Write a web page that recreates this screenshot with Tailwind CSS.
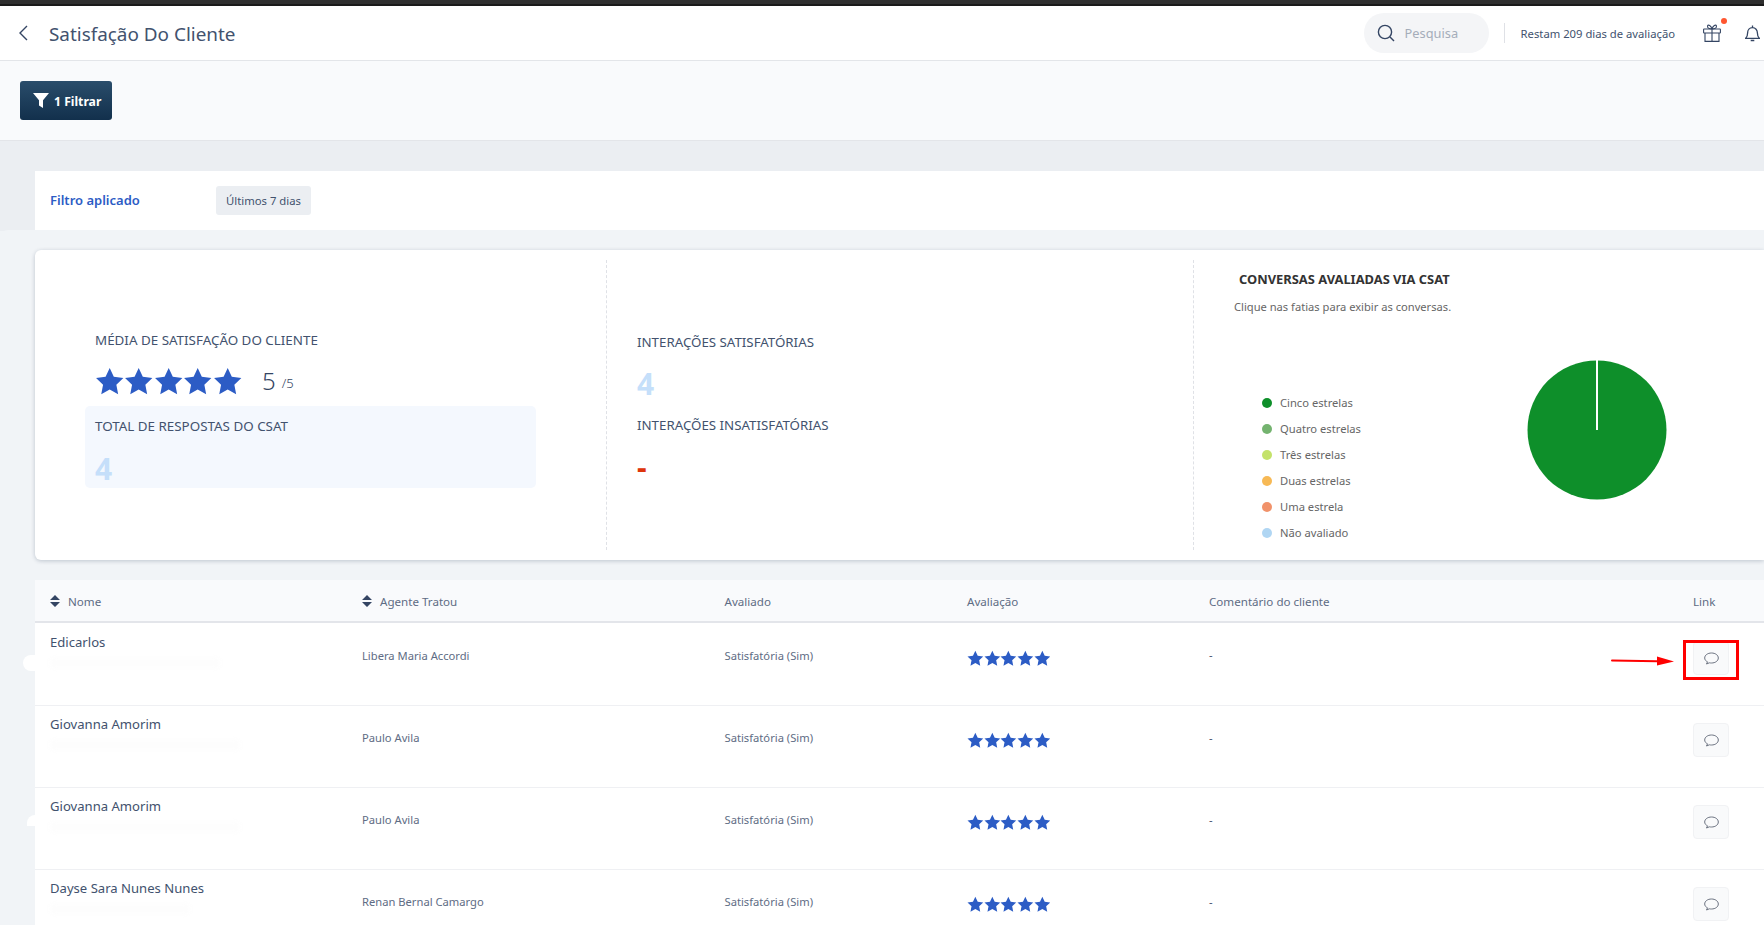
<!DOCTYPE html>
<html lang="pt">
<head>
<meta charset="utf-8">
<title>Satisfação Do Cliente</title>
<script src="https://cdn.jsdelivr.net/npm/@tailwindcss/browser@4"></script>
</head>
<body class="relative h-[925px] w-[1764px] overflow-hidden bg-[#f1f4f7] font-['Noto_Sans',sans-serif] text-[#42526e]">
<div class="h-[6px] border-b-2 border-[#1a1a1a] bg-[#2f2f2f]"></div>
<header class="flex h-[55px] items-center border-b border-[#e3e5e9] bg-white pl-[19px] pr-[4px]">
  <svg class="h-[16px] w-[9px] text-[#344563]" viewBox="0 0 9 16" fill="none" stroke="currentColor" stroke-width="1.4"><path d="M8 1 1 8l7 7"/></svg>
  <h1 class="ml-[21px] mt-[2px] text-[18.900px] font-normal leading-none text-[#42526e]">Satisfação Do Cliente</h1>
  <div class="ml-auto flex h-[40px] w-[125px] items-center rounded-[20px] bg-[#f4f5f7] pl-[13px]">
    <svg class="h-[18px] w-[18px] text-[#344563]" viewBox="0 0 18 18" fill="none" stroke="currentColor" stroke-width="1.4"><circle cx="8" cy="8" r="6.6"/><path d="m13 13 4 4"/></svg>
    <span class="ml-[10px] mt-[1px] text-[12.800px] text-[#a5adba]">Pesquisa</span>
  </div>
  <div class="ml-[15px] h-[20px] w-px bg-[#dfe1e6]"></div>
  <span class="ml-[16px] mt-[3px] text-[11.250px] text-[#42526e]">Restam 209 dias de avaliação</span>
  <div class="relative ml-[28px] h-[18px] w-[18px]">
    <svg class="h-[18px] w-[18px] text-[#344563]" viewBox="0 0 18 18" fill="none" stroke="currentColor" stroke-width="1.1"><rect x=".6" y="5" width="16.8" height="4" rx=".5"/><path d="M2 9v8.4h14V9M9 5v12.4M9 5C6 5 4 3.6 4.6 1.8 5.3.2 8 1.600 9 5Zm0 0c3 0 5-1.400 4.400-3.200C12.700.2 10 1.600 9 5Z"/></svg>
    <span class="absolute -right-[6px] -top-[6px] h-[6px] w-[6px] rounded-full bg-[#ff5630]"></span>
  </div>
  <svg class="ml-[24px] h-[17px] w-[15px] shrink-0 text-[#344563]" viewBox="0 0 15 17" fill="none" stroke="currentColor" stroke-width="1.3"><path d="M.7 13.300h13.600c-1.700-1.500-1.900-3-1.900-5.300 0-3-1.900-5.300-4.900-5.300S2.600 5 2.600 8c0 2.300-.2 3.800-1.900 5.300ZM7.500.5v2.200M5.700 15.500h3.600"/></svg>
</header>
<div class="flex h-[80px] items-center border-b border-[#e3e5e9] bg-[#f9fafc] pl-[20px]">
  <button class="flex h-[39px] w-[92px] items-center rounded-[3px] bg-gradient-to-b from-[#2a4d6b] to-[#12304c] pl-[13px] text-[12.200px] font-bold text-white">
    <svg class="mr-[5px] h-[15px] w-[16px]" viewBox="0 0 16 15" fill="currentColor"><path d="M0 0h16l-6 7.200V15L6 12.500V7.200Z"/></svg><span class="mt-[3px]">1 Filtrar</span>
  </button>
</div>
<div class="h-[90px] bg-[#ebeef2] pl-[35px] pt-[30px]">
  <div class="flex h-[59px] items-center bg-white pl-[15px]">
    <span class="w-[166px] text-[13px] font-semibold text-[#2c5cc5]">Filtro aplicado</span>
    <span class="flex h-[29px] w-[95px] items-center justify-center rounded-[3px] bg-[#ebeef2] pt-[1px] text-[11.300px] text-[#42526e]">Últimos 7 dias</span>
  </div>
</div>
<main class="-mt-px rounded-tl-[8px] bg-[#f1f4f7] pl-[35px] pt-[20px]">
  <section class="flex h-[310px] rounded-l-[6px] bg-white py-[10px] shadow-[0_1px_4px_rgba(9,30,66,0.22)]">
    <div class="w-[571px] pl-[50px] pt-[70px]">
      <p class="pl-[10px] text-[13.400px] leading-[20px]">MÉDIA DE SATISFAÇÃO DO CLIENTE</p>
      <div class="mt-[13px] flex h-[36px] items-center pl-[10px]">
        <div class="flex w-[147px] text-[#2c5cc5]">
          <svg class="h-[29px] w-[29.500px]" viewBox="0 0 24 24" fill="currentColor"><path d="M12 .8l3.400 7.300 7.900 1-5.800 5.500 1.500 7.900-7-3.900-7 3.900 1.500-7.900L.7 9.100l7.900-1z"/></svg>
          <svg class="h-[29px] w-[29.500px]" viewBox="0 0 24 24" fill="currentColor"><path d="M12 .8l3.400 7.300 7.900 1-5.800 5.500 1.500 7.900-7-3.900-7 3.900 1.500-7.900L.7 9.100l7.900-1z"/></svg>
          <svg class="h-[29px] w-[29.500px]" viewBox="0 0 24 24" fill="currentColor"><path d="M12 .8l3.400 7.300 7.900 1-5.800 5.500 1.500 7.900-7-3.900-7 3.900 1.500-7.900L.7 9.100l7.900-1z"/></svg>
          <svg class="h-[29px] w-[29.500px]" viewBox="0 0 24 24" fill="currentColor"><path d="M12 .8l3.400 7.300 7.900 1-5.800 5.500 1.500 7.900-7-3.900-7 3.900 1.500-7.900L.7 9.100l7.900-1z"/></svg>
          <svg class="h-[29px] w-[29.500px]" viewBox="0 0 24 24" fill="currentColor"><path d="M12 .8l3.400 7.300 7.900 1-5.800 5.500 1.500 7.900-7-3.900-7 3.900 1.500-7.900L.7 9.100l7.900-1z"/></svg>
        </div>
        <span class="ml-[20px] text-[24px] font-light leading-none text-[#344563]">5</span>
        <span class="ml-[6px] mt-[4px] text-[13px] font-light leading-none text-[#344563]">/5</span>
      </div>
      <div class="mt-[7px] h-[82px] w-[451px] rounded-[5px] bg-[#f4f8fe] pl-[10px] pt-[10px]">
        <p class="text-[13.400px] leading-[20px]">TOTAL DE RESPOSTAS DO CSAT</p>
        <p class="mt-[15px] text-[30px] font-bold leading-[36px] text-[#c5dffa]">4</p>
      </div>
    </div>
    <div class="w-[587px] border-l border-dashed border-[#dfe1e6] pl-[30px] pt-[72px]">
      <p class="text-[13.300px] leading-[20px]">INTERAÇÕES SATISFATÓRIAS</p>
      <p class="mt-[13px] text-[30px] font-bold leading-[38px] text-[#c5dffa]">4</p>
      <p class="mt-[12px] text-[13.300px] leading-[20px]">INTERAÇÕES INSATISFATÓRIAS</p>
      <p class="mt-[13px] text-[30px] font-bold leading-[38px] text-[#de350b]">-</p>
    </div>
    <div class="relative flex-1 border-l border-dashed border-[#dfe1e6] pt-[9px]">
      <p class="pl-[45px] text-[12.900px] font-bold leading-[20px] text-[#333]">CONVERSAS AVALIADAS VIA CSAT</p>
      <p class="mt-[8px] pl-[40px] text-[11.150px] leading-[20px] text-[#666]">Clique nas fatias para exibir as conversas.</p>
      <ul class="mt-[76px] flex flex-col gap-[6px] pl-[68px] text-[11.200px] leading-[20px] text-[#666]">
        <li class="flex items-center"><span class="mr-[8px] h-[10px] w-[10px] rounded-full bg-[#0e8f2a]"></span>Cinco estrelas</li>
        <li class="flex items-center"><span class="mr-[8px] h-[10px] w-[10px] rounded-full bg-[#74b36f]"></span>Quatro estrelas</li>
        <li class="flex items-center"><span class="mr-[8px] h-[10px] w-[10px] rounded-full bg-[#c4e26a]"></span>Três estrelas</li>
        <li class="flex items-center"><span class="mr-[8px] h-[10px] w-[10px] rounded-full bg-[#f7b955]"></span>Duas estrelas</li>
        <li class="flex items-center"><span class="mr-[8px] h-[10px] w-[10px] rounded-full bg-[#f1926a]"></span>Uma estrela</li>
        <li class="flex items-center"><span class="mr-[8px] h-[10px] w-[10px] rounded-full bg-[#b0d6f3]"></span>Não avaliado</li>
      </ul>
      <svg class="absolute left-[333px] top-[100px] h-[140px] w-[140px]" viewBox="0 0 140 140"><circle cx="70" cy="70" r="69.5" fill="#0e8f2a"/><path d="M70 0v70" stroke="#fff" stroke-width="2"/></svg>
    </div>
  </section>

  <section class="mt-[20px] text-[11.200px]">
    <div class="grid h-[43px] grid-cols-[312px_362.500px_242.500px_242px_484px_1fr] items-center border-b-2 border-[#e3e5ea] bg-[#f9fafc] pl-[15px] text-[11.600px] font-normal text-[#5e6c84]">
      <div class="mt-[2px] flex items-center gap-[8px]"><svg class="h-[12px] w-[10px]" viewBox="0 0 10 12" fill="#344563"><path d="M5 0l5 5H0zM5 12 0 7h10z"/></svg>Nome</div>
      <div class="mt-[2px] flex items-center gap-[8px]"><svg class="h-[12px] w-[10px]" viewBox="0 0 10 12" fill="#344563"><path d="M5 0l5 5H0zM5 12 0 7h10z"/></svg>Agente Tratou</div>
      <div class="mt-[2px]">Avaliado</div>
      <div class="mt-[2px]">Avaliação</div>
      <div class="mt-[2px]">Comentário do cliente</div>
      <div class="mt-[2px]">Link</div>
    </div>

    <div class="grid h-[83px] grid-cols-[312px_362.500px_242.500px_242px_484px_1fr] border-b border-[#eff0f3] bg-white pl-[15px]">
      <div class="pt-[9px] text-[13.100px] leading-[20px]">Edicarlos<div class="mt-[6px] h-[10px] w-[170px] rounded-[4px] bg-[#fdfdfd] blur-[2px]"></div></div>
      <div class="pt-[23px] leading-[20px] text-[#5e6c84]">Libera Maria Accordi</div>
      <div class="pt-[23px] leading-[20px] text-[#5e6c84]">Satisfatória (Sim)</div>
      <div class="flex pt-[27px] text-[#2c5cc5]">
        <svg class="h-[17px] w-[16.700px]" viewBox="0 0 24 24" fill="currentColor"><path d="M12 .8l3.400 7.300 7.900 1-5.800 5.500 1.500 7.900-7-3.900-7 3.900 1.500-7.900L.7 9.100l7.900-1z"/></svg>
        <svg class="h-[17px] w-[16.700px]" viewBox="0 0 24 24" fill="currentColor"><path d="M12 .8l3.400 7.300 7.900 1-5.800 5.500 1.500 7.900-7-3.900-7 3.900 1.500-7.900L.7 9.100l7.900-1z"/></svg>
        <svg class="h-[17px] w-[16.700px]" viewBox="0 0 24 24" fill="currentColor"><path d="M12 .8l3.400 7.300 7.900 1-5.800 5.500 1.500 7.900-7-3.900-7 3.900 1.500-7.900L.7 9.100l7.900-1z"/></svg>
        <svg class="h-[17px] w-[16.700px]" viewBox="0 0 24 24" fill="currentColor"><path d="M12 .8l3.400 7.300 7.900 1-5.800 5.500 1.500 7.900-7-3.900-7 3.900 1.500-7.900L.7 9.100l7.900-1z"/></svg>
        <svg class="h-[17px] w-[16.700px]" viewBox="0 0 24 24" fill="currentColor"><path d="M12 .8l3.400 7.300 7.900 1-5.800 5.500 1.500 7.900-7-3.900-7 3.900 1.500-7.900L.7 9.100l7.900-1z"/></svg>
      </div>
      <div class="pt-[22px] leading-[20px]">-</div>
      <div class="pt-[18px]"><button class="flex h-[34px] w-[36px] items-center justify-center rounded-[4px] border border-[#f1f2f4] bg-[#f9fafb]"><svg class="h-[13px] w-[15px]" viewBox="0 0 15 13" fill="none" stroke="#6b7280"><path d="M3.500 9.800C1.800 9 .7 7.800.7 6 .7 3.100 3.700 1 7.500 1s6.800 2.100 6.800 5-3 5-6.800 5c-.7 0-1.400 0-2.100-.2L2.500 12Z"/></svg></button></div>
    </div>

    <div class="grid h-[82px] grid-cols-[312px_362.500px_242.500px_242px_484px_1fr] border-b border-[#eff0f3] bg-white pl-[15px]">
      <div class="pt-[8px] text-[13.100px] leading-[20px]">Giovanna Amorim<div class="mt-[6px] h-[10px] w-[190px] rounded-[4px] bg-[#fdfdfd] blur-[2px]"></div></div>
      <div class="pt-[22px] leading-[20px] text-[#5e6c84]">Paulo Avila</div>
      <div class="pt-[22px] leading-[20px] text-[#5e6c84]">Satisfatória (Sim)</div>
      <div class="flex pt-[26px] text-[#2c5cc5]">
        <svg class="h-[17px] w-[16.700px]" viewBox="0 0 24 24" fill="currentColor"><path d="M12 .8l3.400 7.300 7.900 1-5.800 5.500 1.500 7.900-7-3.900-7 3.900 1.500-7.900L.7 9.100l7.900-1z"/></svg>
        <svg class="h-[17px] w-[16.700px]" viewBox="0 0 24 24" fill="currentColor"><path d="M12 .8l3.400 7.300 7.900 1-5.800 5.500 1.500 7.900-7-3.900-7 3.900 1.500-7.900L.7 9.100l7.900-1z"/></svg>
        <svg class="h-[17px] w-[16.700px]" viewBox="0 0 24 24" fill="currentColor"><path d="M12 .8l3.400 7.300 7.900 1-5.800 5.500 1.500 7.900-7-3.900-7 3.900 1.500-7.900L.7 9.100l7.900-1z"/></svg>
        <svg class="h-[17px] w-[16.700px]" viewBox="0 0 24 24" fill="currentColor"><path d="M12 .8l3.400 7.300 7.900 1-5.800 5.500 1.500 7.900-7-3.900-7 3.900 1.500-7.900L.7 9.100l7.900-1z"/></svg>
        <svg class="h-[17px] w-[16.700px]" viewBox="0 0 24 24" fill="currentColor"><path d="M12 .8l3.400 7.300 7.900 1-5.800 5.500 1.500 7.900-7-3.900-7 3.900 1.500-7.900L.7 9.100l7.900-1z"/></svg>
      </div>
      <div class="pt-[22px] leading-[20px]">-</div>
      <div class="pt-[17px]"><button class="flex h-[34px] w-[36px] items-center justify-center rounded-[4px] border border-[#f1f2f4] bg-[#f9fafb]"><svg class="h-[13px] w-[15px]" viewBox="0 0 15 13" fill="none" stroke="#6b7280"><path d="M3.500 9.800C1.800 9 .7 7.800.7 6 .7 3.100 3.700 1 7.500 1s6.800 2.100 6.800 5-3 5-6.800 5c-.7 0-1.400 0-2.100-.2L2.500 12Z"/></svg></button></div>
    </div>

    <div class="grid h-[82px] grid-cols-[312px_362.500px_242.500px_242px_484px_1fr] border-b border-[#eff0f3] bg-white pl-[15px]">
      <div class="pt-[8px] text-[13.100px] leading-[20px]">Giovanna Amorim<div class="mt-[6px] h-[10px] w-[190px] rounded-[4px] bg-[#fdfdfd] blur-[2px]"></div></div>
      <div class="pt-[22px] leading-[20px] text-[#5e6c84]">Paulo Avila</div>
      <div class="pt-[22px] leading-[20px] text-[#5e6c84]">Satisfatória (Sim)</div>
      <div class="flex pt-[26px] text-[#2c5cc5]">
        <svg class="h-[17px] w-[16.700px]" viewBox="0 0 24 24" fill="currentColor"><path d="M12 .8l3.400 7.300 7.900 1-5.800 5.500 1.500 7.900-7-3.900-7 3.900 1.500-7.900L.7 9.100l7.900-1z"/></svg>
        <svg class="h-[17px] w-[16.700px]" viewBox="0 0 24 24" fill="currentColor"><path d="M12 .8l3.400 7.300 7.900 1-5.800 5.500 1.500 7.900-7-3.900-7 3.900 1.500-7.900L.7 9.100l7.900-1z"/></svg>
        <svg class="h-[17px] w-[16.700px]" viewBox="0 0 24 24" fill="currentColor"><path d="M12 .8l3.400 7.300 7.900 1-5.800 5.500 1.500 7.900-7-3.900-7 3.900 1.500-7.900L.7 9.100l7.900-1z"/></svg>
        <svg class="h-[17px] w-[16.700px]" viewBox="0 0 24 24" fill="currentColor"><path d="M12 .8l3.400 7.300 7.900 1-5.800 5.500 1.500 7.900-7-3.900-7 3.900 1.500-7.900L.7 9.100l7.900-1z"/></svg>
        <svg class="h-[17px] w-[16.700px]" viewBox="0 0 24 24" fill="currentColor"><path d="M12 .8l3.400 7.300 7.900 1-5.800 5.500 1.500 7.900-7-3.900-7 3.900 1.500-7.900L.7 9.100l7.900-1z"/></svg>
      </div>
      <div class="pt-[22px] leading-[20px]">-</div>
      <div class="pt-[17px]"><button class="flex h-[34px] w-[36px] items-center justify-center rounded-[4px] border border-[#f1f2f4] bg-[#f9fafb]"><svg class="h-[13px] w-[15px]" viewBox="0 0 15 13" fill="none" stroke="#6b7280"><path d="M3.500 9.800C1.800 9 .7 7.800.7 6 .7 3.100 3.700 1 7.500 1s6.800 2.100 6.800 5-3 5-6.800 5c-.7 0-1.400 0-2.100-.2L2.500 12Z"/></svg></button></div>
    </div>

    <div class="grid h-[82px] grid-cols-[312px_362.500px_242.500px_242px_484px_1fr] bg-white pl-[15px]">
      <div class="pt-[8px] text-[13.100px] leading-[20px]">Dayse Sara Nunes Nunes<div class="mt-[6px] h-[10px] w-[140px] rounded-[4px] bg-[#fdfdfd] blur-[2px]"></div></div>
      <div class="pt-[22px] leading-[20px] text-[#5e6c84]">Renan Bernal Camargo</div>
      <div class="pt-[22px] leading-[20px] text-[#5e6c84]">Satisfatória (Sim)</div>
      <div class="flex pt-[26px] text-[#2c5cc5]">
        <svg class="h-[17px] w-[16.700px]" viewBox="0 0 24 24" fill="currentColor"><path d="M12 .8l3.400 7.300 7.900 1-5.800 5.500 1.500 7.900-7-3.900-7 3.900 1.500-7.900L.7 9.100l7.900-1z"/></svg>
        <svg class="h-[17px] w-[16.700px]" viewBox="0 0 24 24" fill="currentColor"><path d="M12 .8l3.400 7.300 7.900 1-5.800 5.500 1.500 7.900-7-3.900-7 3.900 1.500-7.900L.7 9.100l7.900-1z"/></svg>
        <svg class="h-[17px] w-[16.700px]" viewBox="0 0 24 24" fill="currentColor"><path d="M12 .8l3.400 7.300 7.900 1-5.800 5.500 1.500 7.900-7-3.900-7 3.900 1.500-7.900L.7 9.100l7.900-1z"/></svg>
        <svg class="h-[17px] w-[16.700px]" viewBox="0 0 24 24" fill="currentColor"><path d="M12 .8l3.400 7.300 7.900 1-5.800 5.500 1.500 7.900-7-3.900-7 3.900 1.500-7.900L.7 9.100l7.900-1z"/></svg>
        <svg class="h-[17px] w-[16.700px]" viewBox="0 0 24 24" fill="currentColor"><path d="M12 .8l3.400 7.300 7.900 1-5.800 5.500 1.500 7.900-7-3.900-7 3.900 1.500-7.900L.7 9.100l7.900-1z"/></svg>
      </div>
      <div class="pt-[22px] leading-[20px]">-</div>
      <div class="pt-[17px]"><button class="flex h-[34px] w-[36px] items-center justify-center rounded-[4px] border border-[#f1f2f4] bg-[#f9fafb]"><svg class="h-[13px] w-[15px]" viewBox="0 0 15 13" fill="none" stroke="#6b7280"><path d="M3.500 9.800C1.800 9 .7 7.800.7 6 .7 3.100 3.700 1 7.500 1s6.800 2.100 6.800 5-3 5-6.800 5c-.7 0-1.400 0-2.100-.2L2.500 12Z"/></svg></button></div>
    </div>
  </section>
</main>

<!-- annotation drawn over the screenshot -->
<div class="absolute left-[1683px] top-[640px] h-[40px] w-[56px] border-[3px] border-[#ff0000]"></div>
<svg class="absolute left-[1611px] top-[655px] h-[12px] w-[63px]" viewBox="0 0 63 12"><path d="M1 5.500 46 6.200" stroke="#ff0000" stroke-width="2" stroke-linecap="round"/><path d="M46 1.500 63 6.500 46 10.500Z" fill="#ff0000"/></svg>
<!-- white smudges on the page's left margin -->
<div class="absolute left-[23px] top-[655px] h-[16px] w-[14px] rounded-l-[8px] bg-white"></div>
<div class="absolute left-[27px] top-[815px] h-[11px] w-[10px] rounded-tl-[8px] bg-white"></div>
</body>
</html>
